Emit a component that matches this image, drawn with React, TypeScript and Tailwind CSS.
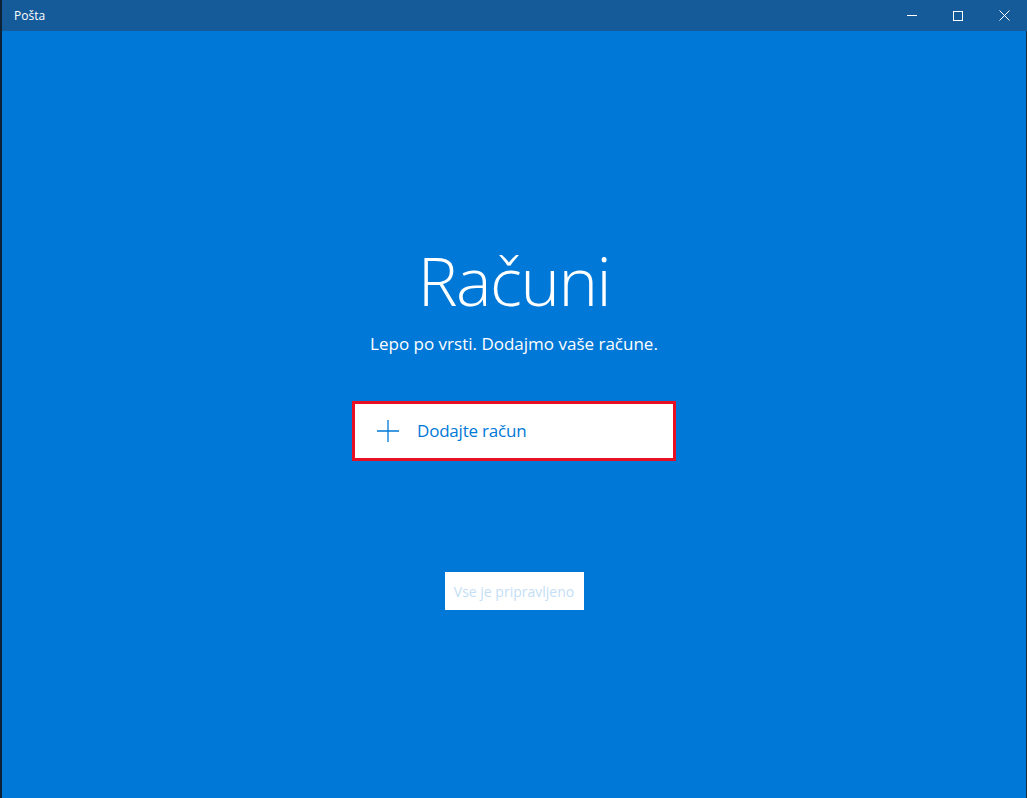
import React from "react";

export default function App() {
  const seg = { fontFamily: '"Open Sans", "Noto Sans", "Liberation Sans", sans-serif' };
  return (
    <div className="w-[1027px] h-[798px] flex flex-col bg-[#0078d7] overflow-hidden" style={seg}>
      <div className="h-[31px] bg-[#155a99] flex items-center text-white shrink-0">
        <div className="w-[2px] h-full bg-[#0d2236]" />
        <span className="ml-[12px] text-[12px]">Pošta</span>
        <div className="ml-auto flex h-full">
          <div className="w-[46px] h-full flex items-center justify-center">
            <div className="w-[10px] h-px bg-white" />
          </div>
          <div className="w-[46px] h-full flex items-center justify-center">
            <div className="w-[10px] h-[10px] border border-white" />
          </div>
          <div className="w-[46px] h-full flex items-center justify-center">
            <svg width="11" height="11" viewBox="0 0 11 11" stroke="white" strokeWidth="1">
              <path d="M0.5 0.5 L10.5 10.5 M10.5 0.5 L0.5 10.5" />
            </svg>
          </div>
        </div>
      </div>
      <div className="flex-1 flex">
        <div className="w-[2px] bg-[#0d2236]" />
        <div className="flex-1 flex flex-col items-center">
          <h1 className="mt-[199px] text-[67px] font-light text-white leading-[100px] tracking-[-1.5px]">Računi</h1>
          <p className="mt-[2px] text-[17px] text-white leading-[24px]">Lepo po vrsti. Dodajmo vaše račune.</p>
          <div className="mt-[45px] w-[324px] h-[60px] border-[3px] border-[#e81123] bg-white flex items-center">
            <svg className="ml-[22px]" width="22" height="22" viewBox="0 0 22 22" stroke="#0078d7" strokeWidth="1.3">
              <path d="M11 0 V22 M0 11 H22" />
            </svg>
            <span className="ml-[18px] text-[17px] text-[#0078d7] tracking-[-0.2px]">Dodajte račun</span>
          </div>
          <div className="mt-[111px] w-[139px] h-[38px] bg-white flex items-center justify-center">
            <span className="text-[14px] text-[#c4def5]">Vse je pripravljeno</span>
          </div>
        </div>
        <div className="w-px bg-[#1d2a38]" />
      </div>
    </div>
  );
}
